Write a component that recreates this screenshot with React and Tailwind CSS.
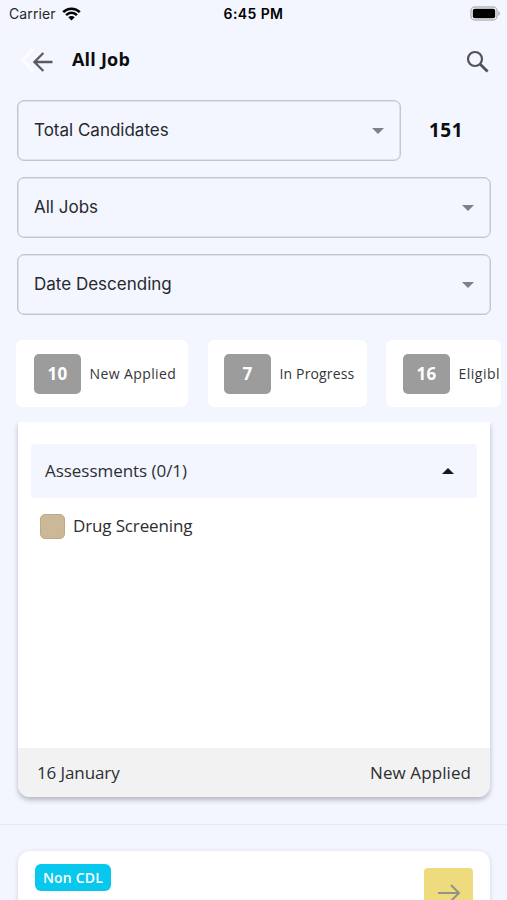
import React from 'react';

const FILTERS = ['All Jobs', 'Date Descending'];

const STAGES = [
  { count: 10, label: 'New Applied', width: 'w-[172px] pl-[18px]', text: 'tracking-[0.4px]' },
  { count: 7, label: 'In Progress', width: 'w-[159px] pl-[16.5px]', text: 'tracking-[0.15px]' },
  { count: 16, label: 'Eligibl', width: 'w-[115px] pl-[17px]', text: 'tracking-[0.5px]' },
];

const StatusBar = () => (
  <div className="grid h-7 grid-cols-3 items-center pb-px pl-[9px] pr-[7px] font-['Inter',sans-serif]">
    <div className="flex items-center gap-[6px] text-[14px] tracking-[0.1px] text-[#25272b]">
      <span>Carrier</span>
      <svg width="19" height="14" viewBox="0 0 19 14" fill="none" stroke="#000" strokeWidth="2.5">
        <path d="M1.2 5.1a11.7 11.7 0 0 1 16.6 0" />
        <path d="M4.1 8.1a7.6 7.6 0 0 1 10.8 0" />
        <path d="M6.3 10.3a4.5 4.5 0 0 1 6.4 0L9.5 13.5z" fill="#000" stroke="none" />
      </svg>
    </div>
    <span className="pr-[2px] text-center text-[14px] font-semibold tracking-[0.4px] text-black">6:45 PM</span>
    <svg className="justify-self-end" width="30" height="16" viewBox="0 0 30 16">
      <rect x="1" y="1" width="26" height="13" rx="4" fill="#fff" stroke="#b5b7bb" strokeWidth="1.5" />
      <rect x="2.8" y="2.8" width="22.4" height="9.4" rx="2" fill="#000" />
      <path d="M28.2 5v5c1.2-.4 1.8-1.4 1.8-2.5S29.4 5.4 28.2 5z" fill="#b5b7bb" />
    </svg>
  </div>
);

const Header = () => (
  <header className="flex h-[72px] items-start pl-5 pr-[17px] pt-[18px]">
    <div className="relative h-8 w-[34px]">
      <svg className="absolute left-0 top-0" width="16" height="28" viewBox="0 0 16 28" fill="none" stroke="#fcfdff" strokeWidth="3">
        <path d="M13 3 3 14l10 11" />
      </svg>
      <svg className="absolute left-[12px] top-[5px]" width="22" height="22" viewBox="0 0 22 22" fill="none" stroke="#5a5b5f" strokeWidth="2.3">
        <path d="M20.5 11H3M11.4 2l-9 9 9 9" />
      </svg>
    </div>
    <h1 className="ml-[18px] text-[18px] font-bold leading-[26px] tracking-[0.2px] text-[#0c0d0f]">All Job</h1>
    <svg className="ml-auto mt-[4px]" width="24" height="24" viewBox="0 0 24 24" fill="none" stroke="#515256">
      <circle cx="9" cy="9" r="7" strokeWidth="2.2" />
      <path d="m14.2 14.2 7.4 7.4" strokeWidth="2.8" />
    </svg>
  </header>
);

const Select = ({ label }) => (
  <div className="flex h-[61px] flex-1 items-center justify-between rounded-[7px] border border-[#c3c6cf] px-4 font-['Inter',sans-serif] text-[17px] text-[#26282c] shadow-[inset_0_0_0_0.5px_#c8cbd4]">
    <span className="pt-px">{label}</span>
    <svg width="12" height="6" viewBox="0 0 12 6" fill="#7f8186">
      <path d="M0 0h12L6 6z" />
    </svg>
  </div>
);

const Stage = ({ count, label, width, text }) => (
  <div className={`flex h-[67px] shrink-0 items-center rounded-[6px] bg-white ${width}`}>
    <span className="flex h-10 w-[47px] shrink-0 items-center justify-center rounded-[5px] bg-[#9c9c9c] pt-px text-[17px] font-bold tracking-[0.4px] text-white">{count}</span>
    <span className={`ml-[8.5px] whitespace-nowrap text-[14px] text-[#34363a] ${text}`}>{label}</span>
  </div>
);

const CandidateCard = () => (
  <article className="ml-[18px] mr-[17px] flex h-[375px] flex-col overflow-hidden rounded-b-[12px] bg-white shadow-[0_3px_5px_rgba(60,65,75,0.34)]">
    <div className="mx-[13px] mt-[22px] flex h-[54px] items-center justify-between rounded-[4px] bg-[#f3f6ff] pl-[14px] pr-[23px] text-[17px] text-[#2b2e33]">
      <span className="tracking-[-0.04px]">Assessments (0/1)</span>
      <svg width="12" height="6" viewBox="0 0 12 6" fill="#15171a">
        <path d="M0 6h12L6 0z" />
      </svg>
    </div>
    <div className="mt-[15px] flex items-center gap-[8px] pl-[22px]">
      <span className="h-[25px] w-[25px] rounded-[5px] border border-[#bfa981] bg-[#cbb898]" />
      <span className="text-[17px] leading-[26px] tracking-[-0.14px] text-[#2b2e33]">Drug Screening</span>
    </div>
    <div className="mt-auto flex h-[49px] items-center justify-between bg-[#f2f2f2] px-[19px] text-[17px] text-[#2b2e33]">
      <span className="tracking-[-0.1px]">16 January</span>
      <span className="tracking-[0.08px]">New Applied</span>
    </div>
  </article>
);

const NextCard = () => (
  <article className="ml-[18px] mr-[17px] mt-[26px] flex h-[120px] items-start justify-between rounded-[12px] bg-white px-[17px] shadow-[0_1px_4px_rgba(60,65,75,0.2)]">
    <span className="mt-[13px] flex h-[27px] w-[76px] items-center justify-center rounded-[6px] bg-[#08c8ee] text-[14px] font-semibold tracking-[0.2px] text-white">Non CDL</span>
    <div className="mt-[17px] flex h-[49px] w-[49px] items-center justify-center rounded-[4px] bg-[#eddb7e]">
      <svg width="24" height="20" viewBox="0 0 24 20" fill="none" stroke="#96918a" strokeWidth="2">
        <path d="M1 10h21M14 2l8 8-8 8" />
      </svg>
    </div>
  </article>
);

const App = () => {
  return (
    <div className="h-[900px] w-[507px] overflow-hidden bg-[#f3f6ff] font-['Open_Sans',sans-serif]">
      <StatusBar />
      <Header />

      {/* Filters */}
      <div className="flex flex-col gap-4 pl-[17px] pr-4">
        <div className="flex items-center">
          <Select label="Total Candidates" />
          <span className="w-[90px] text-center text-[19px] font-bold tracking-[0.5px] text-[#0c0d0f]">151</span>
        </div>
        {FILTERS.map((label) => (
          <div key={label} className="flex">
            <Select label={label} />
          </div>
        ))}
      </div>

      {/* Stage counters, scrolls sideways */}
      <div className="ml-4 mr-[6px] mt-[25px] flex gap-[19.5px] overflow-hidden">
        {STAGES.map((stage) => (
          <Stage key={stage.label} {...stage} />
        ))}
      </div>

      {/* Candidate list */}
      <main className="mt-[15px] h-[478px] overflow-hidden">
        <CandidateCard />
        <div className="mt-[27px] h-px bg-[#e6e9f3]" />
        <NextCard />
      </main>
    </div>
  );
};

export default App;
